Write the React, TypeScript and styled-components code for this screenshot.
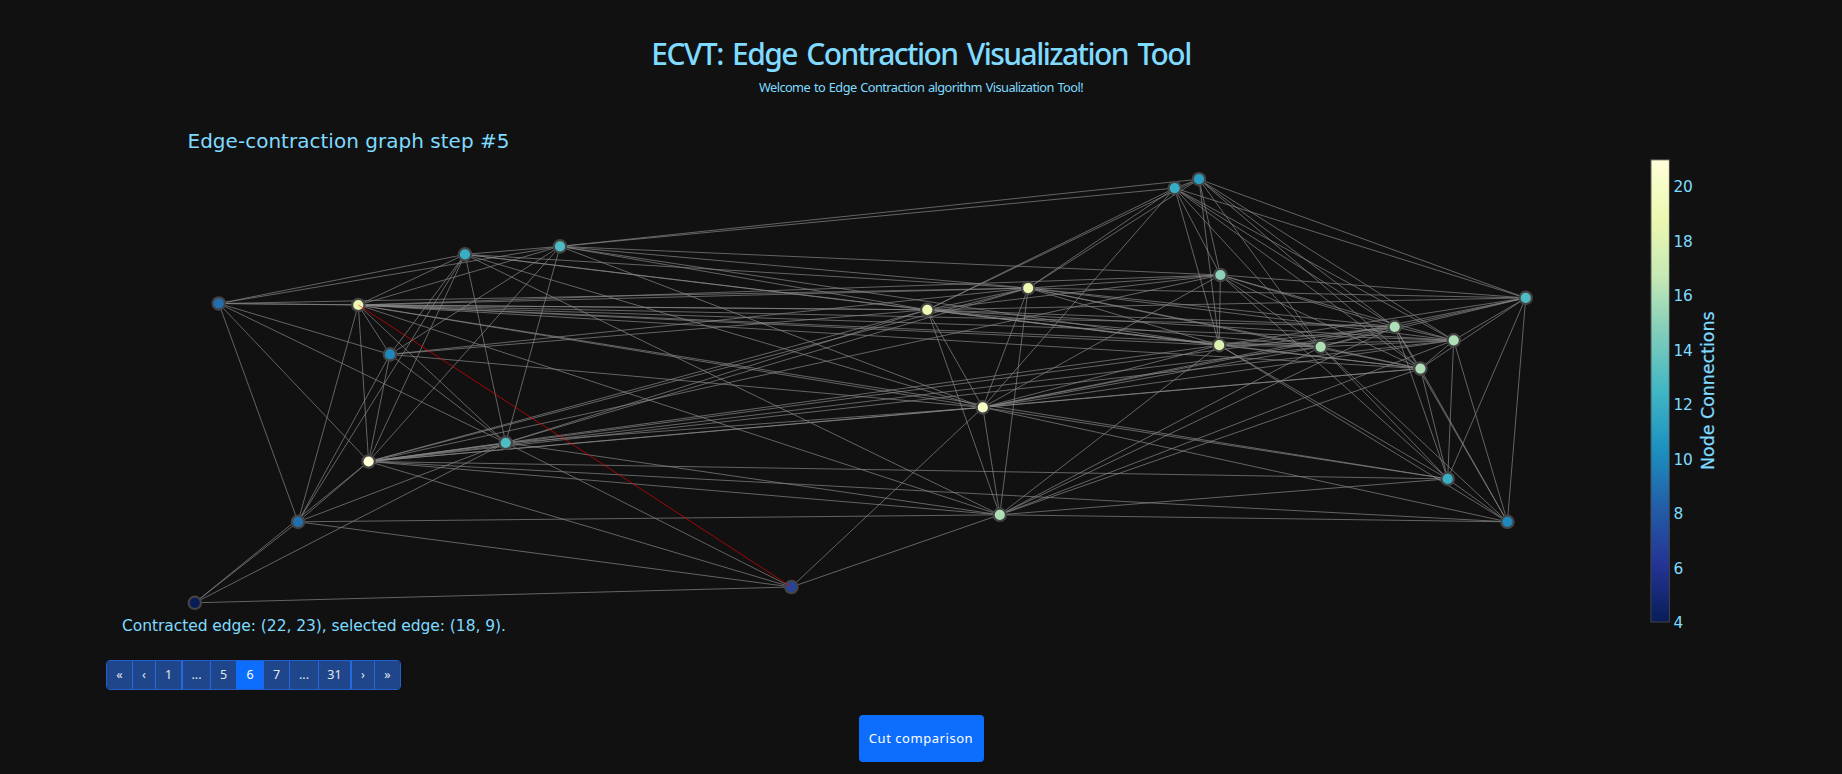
import React from "react";
import styled, { createGlobalStyle } from "styled-components";

const Global = createGlobalStyle`
  * { box-sizing: border-box; }
  html, body { margin: 0; background: #111111; }
  body { height: 774px; overflow: hidden; font-family: "Open Sans", "Noto Sans", sans-serif; }
`;

const Page = styled.main`
  width: 1842px;
  height: 774px;
  display: flex;
  flex-direction: column;
  background: #111111;
  color: #7fdbff;
`;

const Header = styled.header`
  height: 110px;
  padding-top: 33px;
  display: flex;
  flex-direction: column;
  align-items: center;
`;

const Title = styled.h1`
  margin: 0;
  font: 500 30px/42px "Noto Sans", sans-serif;
  letter-spacing: -1.55px;
  word-spacing: 3px;
  white-space: nowrap;
`;

const Subtitle = styled.p`
  margin: 1px 0 0;
  font: 400 12.8px/22px "Noto Sans", sans-serif;
  letter-spacing: -0.58px;
  word-spacing: 1px;
  white-space: nowrap;
`;

const Chart = styled.svg`
  display: block;
  flex: none;
  overflow: visible;
  font-family: "DejaVu Sans", sans-serif;
`;

const Caption = styled.p`
  margin: 0;
  padding-left: 122px;
  height: 30px;
  font: 400 15.5px/30px "DejaVu Sans", sans-serif;
  letter-spacing: -0.06px;
`;

const Pagination = styled.nav`
  display: flex;
  align-self: flex-start;
  margin: 19px 0 0 106px;
  height: 30px;
  border: 1px solid #2460cc;
  border-radius: 4px;
  overflow: hidden;
`;

const PageButton = styled.button<{ $w: number; $active?: boolean; $edge?: number }>`
  width: ${(p) => p.$w}px;
  padding: 0 0 1px;
  border: 0;
  border-left: ${(p) => p.$edge ?? 1}px solid ${(p) => (p.$active ? "#0d6efd" : "#2569e0")};
  background: ${(p) => (p.$active ? "#0d6efd" : "#1f458a")};
  color: ${(p) => (p.$active ? "#ffffff" : "#e4e8ee")};
  font: 400 12.5px/26px "Noto Sans", sans-serif;
`;

const Footer = styled.footer`
  display: flex;
  justify-content: center;
  margin-top: 25px;
`;

const CompareButton = styled.button`
  width: 125px;
  height: 47px;
  padding: 0;
  border: 0;
  border-radius: 4px;
  background: #0d6efd;
  color: #ffffff;
  font: 400 13px/47px "Noto Sans", sans-serif;
  letter-spacing: 0.55px;
  white-space: nowrap;
`;

type NodeSpec = [x: number, y: number, degree: number];

const NODES: Record<string, NodeSpec> = {
  A: [218.8, 303.5, 9],
  B: [358.3, 305, 19],
  C: [465, 254.4, 12],
  D: [560, 246.4, 13],
  E: [390, 354.4, 10],
  F: [505.7, 442.8, 13],
  G: [368.6, 461.5, 21],
  H: [298, 521.8, 9],
  I: [194.8, 602.8, 4],
  J: [791.4, 587, 7],
  K: [999.8, 514.8, 16],
  L: [982.8, 407.4, 20],
  M: [927.3, 309.8, 19],
  N: [1028.2, 288.1, 19],
  O: [1174.7, 188.1, 12],
  P: [1199, 179.2, 11],
  Q: [1220.4, 275, 15],
  R: [1219.2, 345.2, 18],
  S: [1320.7, 346.8, 16],
  T: [1394.7, 326.8, 16],
  U: [1453.7, 340.3, 16],
  V: [1420.4, 368.6, 16],
  W: [1525.7, 297.9, 13],
  X: [1447.7, 478.9, 12],
  Y: [1507.4, 521.8, 10],
};

const LINKS: Record<string, string> = {
  A: "BCDEFGHMN",
  B: "CDEFGHKLMNQRSTUVX",
  C: "DEFGHKLMNR",
  D: "EFGLMNOPQR",
  E: "FGHLMN",
  F: "GHIJKLMN",
  G: "HIJKLMNQRSTUVXY",
  H: "IJK",
  I: "J",
  J: "KL",
  K: "LMNRSTUVXY",
  L: "MNOQRSTUVWXY",
  M: "NOPQRSTUVW",
  N: "OPQRSTUVW",
  O: "PQRSTUVW",
  P: "QRSTUVW",
  Q: "RSTUVWX",
  R: "STUVWXY",
  S: "TUVWXY",
  T: "UVWXY",
  U: "VWXY",
  V: "WXY",
  W: "XY",
  X: "Y",
};

const SCALE = [
  [8, 29, 88],
  [37, 52, 148],
  [34, 94, 168],
  [29, 145, 192],
  [65, 182, 196],
  [127, 205, 187],
  [199, 233, 180],
  [237, 248, 177],
  [255, 255, 217],
];

const colorFor = (degree: number) => {
  const t = ((degree - 4) / 17) * 8;
  const i = Math.min(7, Math.floor(t));
  const rgb = SCALE[i].map((c, k) => Math.round(c + (SCALE[i + 1][k] - c) * (t - i)));
  return `rgb(${rgb.join(",")})`;
};

const edges = Object.entries(LINKS).flatMap(([from, targets]) =>
  targets.split("").map((to) => [NODES[from], NODES[to]] as const)
);

const path = (a: NodeSpec, b: NodeSpec) => `M${a[0]},${a[1]}L${b[0]},${b[1]}`;
const TICKS = [4, 6, 8, 10, 12, 14, 16, 18, 20];

function GraphChart() {
  return (
    <Chart width="1842" height="501" viewBox="0 110 1842 501">
      <defs>
        <linearGradient id="scale" x1="0" y1="1" x2="0" y2="0">
          {SCALE.map((c, i) => (
            <stop key={i} offset={i / 8} stopColor={`rgb(${c.join(",")})`} />
          ))}
        </linearGradient>
      </defs>
      <text x="187.5" y="148" fontSize="20" fill="#7fdbff" textLength="322">
        Edge-contraction graph step #5
      </text>
      <g stroke="#888888" strokeWidth="0.7" fill="none">
        {edges.map(([a, b], i) => (
          <path key={i} d={path(a, b)} />
        ))}
      </g>
      <g stroke="#444444" strokeWidth="2.2">
        {Object.entries(NODES).map(([id, [x, y, degree]]) => (
          <circle key={id} cx={x} cy={y} r="6.2" fill={colorFor(degree)} />
        ))}
      </g>
      <path d={path(NODES.B, NODES.J)} stroke="#ff0000" strokeWidth="0.6" />
      <rect x="1650.9" y="159.8" width="18.5" height="462.2" fill="url(#scale)" stroke="#444444" />
      <g fontSize="15.4" fill="#7fdbff">
        {TICKS.map((v) => (
          <text key={v} x="1673.5" y={628 - (v - 4) * 27.25} textLength={v > 9 ? 19.4 : undefined}>
            {v}
          </text>
        ))}
      </g>
      <text transform="translate(1714.3 390.7) rotate(-90)" fontSize="17.5" fill="#7fdbff" stroke="#7fdbff" strokeWidth="0.25" textAnchor="middle" textLength="158.5">
        Node Connections
      </text>
    </Chart>
  );
}

const PAGES: { label: string; w: number; active?: boolean; edge?: number }[] = [
  { label: "«", w: 25, edge: 0 },
  { label: "‹", w: 23 },
  { label: "1", w: 26 },
  { label: "...", w: 29, edge: 2 },
  { label: "5", w: 26 },
  { label: "6", w: 27, active: true },
  { label: "7", w: 26 },
  { label: "...", w: 29 },
  { label: "31", w: 32 },
  { label: "›", w: 24, edge: 2 },
  { label: "»", w: 26 },
];

export default function App() {
  return (
    <Page>
      <Global />
      <Header>
        <Title>ECVT: Edge Contraction Visualization Tool</Title>
        <Subtitle>Welcome to Edge Contraction algorithm Visualization Tool!</Subtitle>
      </Header>
      <GraphChart />
      <Caption>Contracted edge: (22, 23), selected edge: (18, 9).</Caption>
      <Pagination>
        {PAGES.map((p, i) => (
          <PageButton key={i} $w={p.w} $active={p.active} $edge={p.edge}>
            {p.label}
          </PageButton>
        ))}
      </Pagination>
      <Footer>
        <CompareButton>Cut comparison</CompareButton>
      </Footer>
    </Page>
  );
}
